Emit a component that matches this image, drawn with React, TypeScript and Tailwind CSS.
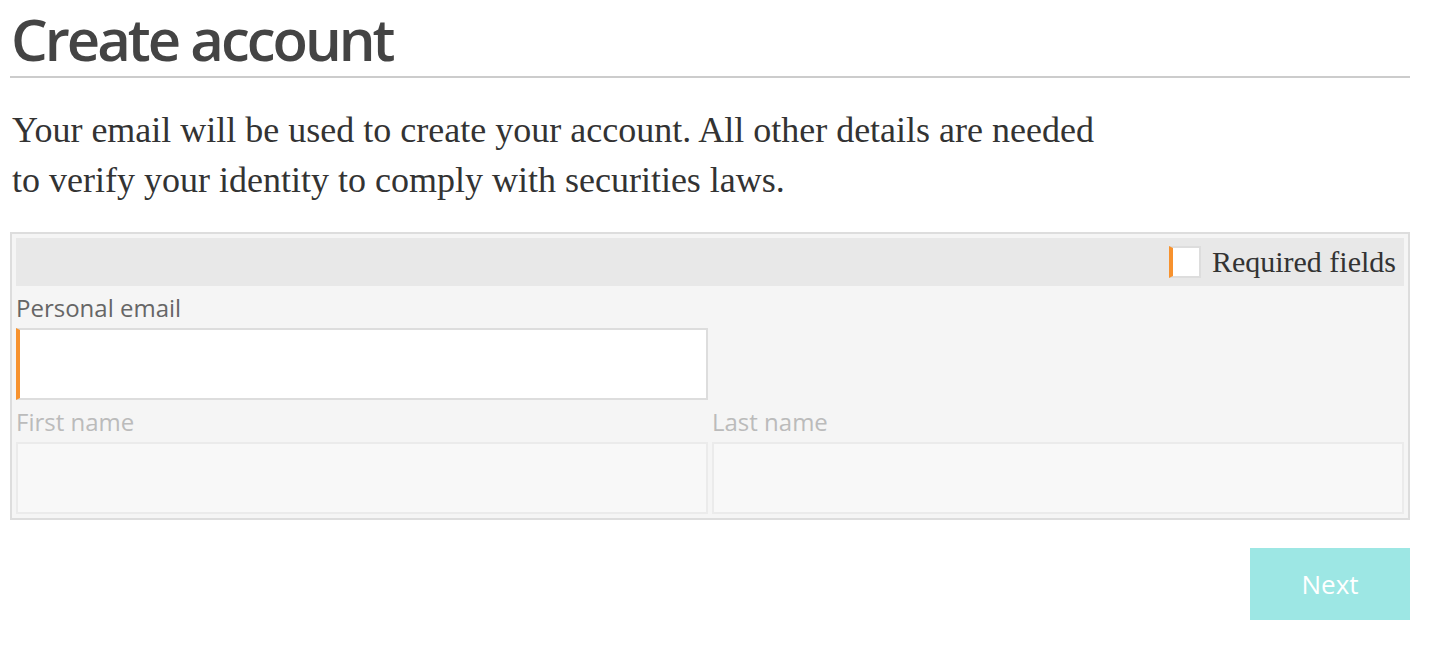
import React from "react";

const sans = { fontFamily: '"Open Sans", "Liberation Sans", sans-serif' };
const serif = { fontFamily: '"Liberation Serif", "DejaVu Serif", serif' };

const Field = ({ label, active, disabled }: { label: string; active?: boolean; disabled?: boolean }) => (
  <div className="flex flex-col">
    <label
      style={sans}
      className={`pt-[6px] pb-[4px] text-[24px] leading-[32px] ${disabled ? "text-[#bbbbbb]" : "text-[#666666]"}`}
    >
      {label}
    </label>
    <input
      type="text"
      disabled={disabled}
      className={`h-[72px] w-full outline-none ${
        disabled
          ? "border-2 border-[#ebebeb] bg-[#f8f8f8]"
          : "border-2 border-[#dddddd] bg-white"
      } ${active ? "border-l-4 border-l-[#f7922e]" : ""}`}
    />
  </div>
);

const App = () => {
  return (
    <div className="min-h-[650px] w-full bg-white pl-[10px]">
      <div className="w-[1400px]">
        <div className="h-[78px] border-b-2 border-[#cccccc]">
          <h1
            style={sans}
            className="pl-[1px] text-[58px] font-semibold leading-[78px] tracking-[-3px] text-[#444444]"
          >
            Create account
          </h1>
        </div>

        <p style={serif} className="mt-[27px] pl-[2px] text-[36px] leading-[50px] text-[#333333]">
          Your email will be used to create your account. All other details are needed
          <br />
          to verify your identity to comply with securities laws.
        </p>

        <div className="mt-[27px] border-2 border-[#dddddd] bg-[#f5f5f5] p-[4px]">
          <div className="flex h-[48px] items-center justify-end bg-[#e8e8e8] pr-[8px]">
            <span className="h-[32px] w-[32px] border-2 border-[#dddddd] border-l-4 border-l-[#f7922e] bg-white" />
            <span style={serif} className="ml-[11px] text-[30px] leading-[32px] text-[#333333]">
              Required fields
            </span>
          </div>

          <div className="grid grid-cols-2 gap-x-[4px]">
            <Field label="Personal email" active />
            <div />
            <Field label="First name" disabled />
            <Field label="Last name" disabled />
          </div>
        </div>

        <div className="mt-[28px] flex justify-end">
          <button
            style={sans}
            className="h-[72px] w-[160px] bg-[#9de7e4] text-[26px] font-medium text-white"
          >
            Next
          </button>
        </div>
      </div>
    </div>
  );
};

export default App;
